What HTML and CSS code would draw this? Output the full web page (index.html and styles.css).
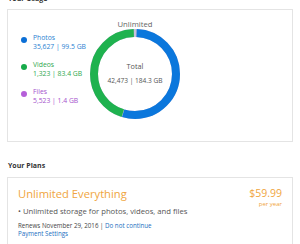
FILE: index.html
```html
<!DOCTYPE html>
<html>
<head>
  <title>Your Storage</title>
  <meta charset="UTF-8">
  <link rel="stylesheet" href="styles.css">
</head>
<body>

  <!-- Usage -->
  <h2 class="section-title usage-title">Your Usage</h2>
  <div class="card usage-card">
    <ul class="legend">
      <li class="legend-item photos">
        <span class="dot"></span>
        <div>
          <div class="legend-label">Photos</div>
          <div class="legend-value">35,627 | 99.5 GB</div>
        </div>
      </li>
      <li class="legend-item videos">
        <span class="dot"></span>
        <div>
          <div class="legend-label">Videos</div>
          <div class="legend-value">1,323 | 83.4 GB</div>
        </div>
      </li>
      <li class="legend-item files">
        <span class="dot"></span>
        <div>
          <div class="legend-label">Files</div>
          <div class="legend-value">5,523 | 1.4 GB</div>
        </div>
      </li>
    </ul>

    <div class="chart">
      <div class="chart-cap">Unlimited</div>
      <div class="donut">
        <svg width="90" height="90" viewBox="0 0 90 90">
          <g transform="rotate(-90 45 45)">
            <circle cx="45" cy="45" r="41" fill="none" stroke="#c9c1dc" stroke-width="8"/>
            <!-- circumference 257.6 -->
            <circle cx="45" cy="45" r="41" fill="none" stroke="#0b77dc" stroke-width="8"
                    stroke-dasharray="139 257.6" stroke-dashoffset="-1.6"/>
            <circle cx="45" cy="45" r="41" fill="none" stroke="#1fb24f" stroke-width="8"
                    stroke-dasharray="115 257.6" stroke-dashoffset="-141"/>
          </g>
        </svg>
        <div class="donut-center">
          <div class="total-label">Total</div>
          <div class="total-value">42,473 | 184.3 GB</div>
        </div>
      </div>
    </div>
  </div>

  <!-- Plans -->
  <h2 class="section-title plans-title">Your Plans</h2>
  <div class="card plan-card">
    <div class="plan-head">
      <div class="plan-name">Unlimited Everything</div>
      <div class="plan-price">
        <div class="price">$59.99</div>
        <div class="period">per year</div>
      </div>
    </div>
    <div class="plan-feature">&bull; Unlimited storage for photos, videos, and files</div>
    <div class="plan-meta">Renews November 29, 2016 | <a href="#">Do not continue</a></div>
    <div class="plan-meta"><a href="#">Payment Settings</a></div>
  </div>

</body>
</html>
```

FILE: styles.css
```css
  html, body {
    margin: 0;
    background: #fff;
  }

  body {
    font-family: "Open Sans", sans-serif;
    color: #555;
    padding: 0 7px;
    overflow: hidden;
  }

  .section-title {
    margin: 0;
    padding-left: 1px;
    font-size: 7px;
    font-weight: bold;
    color: #333;
    line-height: 10px;
  }

  .usage-title {
    margin-top: -6px;
    margin-bottom: 5px;
  }

  .plans-title {
    margin-top: 19px;
  }

  .card {
    border: 1px solid #e4e4e4;
    box-sizing: border-box;
    background: #fff;
  }

  /* Usage card */
  .usage-card {
    display: flex;
    height: 133px;
  }

  .legend {
    list-style: none;
    margin: 0;
    padding: 23px 0 0 13px;
    width: 82px;
    box-sizing: border-box;
  }

  .legend-item {
    display: flex;
    align-items: flex-start;
    margin-bottom: 9px;
  }

  .dot {
    width: 6px;
    height: 6px;
    border-radius: 50%;
    margin: 4px 6px 0 0;
    flex-shrink: 0;
  }

  .legend-label,
  .legend-value {
    font-size: 6.8px;
    line-height: 9px;
    white-space: nowrap;
  }

  .photos .dot { background: #0b6fd6; }
  .photos { color: #2a7fd2; }
  .videos .dot { background: #17ab4a; }
  .videos { color: #2fa84f; }
  .files .dot { background: #b55fd9; }
  .files { color: #a552cc; }

  .chart {
    display: flex;
    flex-direction: column;
    align-items: center;
    width: 90px;
    padding-top: 9px;
  }

  .chart-cap {
    font-size: 7.7px;
    line-height: 10px;
    color: #666;
  }

  .donut {
    position: relative;
    width: 90px;
    height: 90px;
  }

  .donut svg {
    display: block;
  }

  .donut-center {
    position: absolute;
    top: 32px;
    left: 0;
    right: 0;
    text-align: center;
    color: #555;
  }

  .total-label {
    font-size: 7.3px;
    line-height: 10px;
  }

  .total-value {
    font-size: 6.6px;
    line-height: 10px;
    margin-top: 5px;
    white-space: nowrap;
  }

  /* Plan card */
  .plan-card {
    margin-top: 6px;
    height: 80px;
    padding: 9px 10px 0 10px;
  }

  .plan-head {
    display: flex;
    justify-content: space-between;
  }

  .plan-name {
    font-size: 11.2px;
    line-height: 14px;
    color: #f0a540;
  }

  .plan-price {
    text-align: right;
  }

  .price {
    font-size: 10.5px;
    line-height: 13px;
    color: #f0a540;
  }

  .period {
    font-size: 6px;
    line-height: 8px;
    color: #f0a540;
  }

  .plan-feature {
    font-size: 7.7px;
    line-height: 9px;
    margin-top: -1px;
    color: #555;
  }

  .plan-meta {
    font-size: 6.2px;
    line-height: 8px;
    color: #444;
  }

  .plan-feature + .plan-meta {
    margin-top: 6px;
  }

  .plan-meta a {
    color: #1a6ec0;
    text-decoration: none;
  }
```
